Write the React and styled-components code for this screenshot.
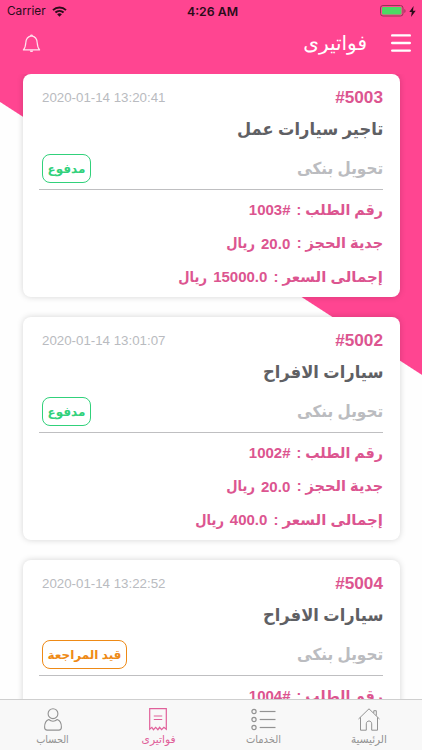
import React from 'react';
import styled, { createGlobalStyle } from 'styled-components';

const GlobalStyle = createGlobalStyle`
  * {
    box-sizing: border-box;
  }

  body {
    margin: 0;
    background: #fefefe;
    font-family: "Liberation Sans", "DejaVu Sans", sans-serif;
  }
`;

// Styled components
const Screen = styled.div`
  width: 422px;
  height: 750px;
  display: flex;
  flex-direction: column;
  overflow: hidden;
  background: linear-gradient(212.9deg, #ff4591 314.3px, #fefefe 315.3px);
`;

const StatusBar = styled.div`
  height: 22px;
  flex: none;
  padding: 0 6px 0 7px;
  display: grid;
  grid-template-columns: 1fr auto 1fr;
  align-items: center;
  font-family: Inter, sans-serif;
  font-size: 11.8px;
  color: #2a0c1a;
`;

const Carrier = styled.div`
  display: flex;
  align-items: center;
  gap: 6px;
`;

const Clock = styled.div`
  padding-left: 2px;
  font-size: 12.3px;
  font-weight: 600;
`;

const Power = styled.div`
  display: flex;
  justify-content: flex-end;
  align-items: center;
  gap: 3px;
`;

const NavBar = styled.header`
  height: 51.5px;
  flex: none;
  padding: 0 11px 9px 22px;
  display: flex;
  align-items: center;
  justify-content: space-between;
`;

const NavRight = styled.div`
  display: flex;
  align-items: center;
  gap: 24px;
`;

const Text = styled.span`
  display: inline-block;
  white-space: nowrap;
  direction: rtl;
  transform: scaleX(${props => props.$stretch || 1});
  transform-origin: ${props => props.$origin || 'right'} center;
`;

const PageTitle = styled(Text)`
  font-size: 20px;
  line-height: 30px;
  color: #fff;
`;

const InvoiceList = styled.main`
  flex: 1;
  min-height: 0;
  padding: 0 22.5px;
  display: flex;
  flex-direction: column;
  gap: 19.5px;
  overflow: hidden;
`;

const InvoiceCard = styled.article`
  height: 223.5px;
  flex: none;
  padding: 11px 16.5px 0;
  border-radius: 8px;
  background: #fff;
  box-shadow: 0 0 6px rgba(0, 0, 0, 0.17);
  direction: rtl;
`;

const CardHeader = styled.div`
  height: 26px;
  padding-left: 3px;
  display: flex;
  align-items: center;
  justify-content: space-between;
`;

const InvoiceId = styled.div`
  font-size: 17.2px;
  font-weight: bold;
  color: #dc5590;
  direction: ltr;
`;

const InvoiceDate = styled.div`
  font-size: 13.3px;
  color: #b9bbc0;
  direction: ltr;
`;

const ServiceRow = styled.div`
  height: 38px;
  display: flex;
  align-items: center;
`;

const Service = styled(Text)`
  font-size: 17.5px;
  font-weight: bold;
  color: #5f6064;
`;

const PaymentRow = styled.div`
  height: 41.5px;
  padding-left: 3px;
  display: flex;
  align-items: center;
  justify-content: space-between;
  border-bottom: 1px solid #bfbfc1;
`;

const Payment = styled(Text)`
  font-size: 16.5px;
  font-weight: bold;
  color: #bbbcc0;
`;

const StatusBadge = styled.div`
  width: ${props => (props.$pending ? 85 : 49)}px;
  height: 29px;
  display: flex;
  align-items: center;
  justify-content: center;
  border: 1px solid;
  border-radius: 8px;
  font-size: 12px;
  font-weight: bold;
  color: ${props => (props.$pending ? '#ee8a16' : '#31d17b')};
`;

const Details = styled.div`
  padding-top: 3px;
`;

const Detail = styled.div`
  height: 33.5px;
  display: flex;
  align-items: center;
  gap: 6px;
  font-size: 15px;
  font-weight: bold;
  color: #dc5590;
`;

const DetailLabel = styled(Text)`
  margin-left: -${props => props.$trim || 0}px;
`;

const DetailValue = styled.span`
  direction: ltr;
`;

const TabBar = styled.nav`
  height: 51px;
  flex: none;
  padding-top: 8px;
  display: grid;
  grid-template-columns: repeat(4, 1fr);
  direction: rtl;
  background: #f8f8f8;
  border-top: 1px solid #cfcfcf;
`;

const Tab = styled.div`
  display: flex;
  flex-direction: column;
  align-items: center;
  font-size: 11px;
  line-height: 17px;
  color: ${props => (props.$active ? '#e0609a' : '#929292')};
`;

const Icon = styled.svg`
  display: block;
  flex: none;
  fill: none;
  stroke: currentColor;
`;

const WifiIcon = () => (
  <Icon width="15" height="11" viewBox="0 0 15 11" strokeWidth="2">
    <path d="M1 4.1a9.4 9.4 0 0 1 13 0M3.4 6.6a6 6 0 0 1 8.2 0" />
    <path d="M7.5 10.7 5.1 8.3a3.5 3.5 0 0 1 4.8 0z" fill="currentColor" stroke="none" />
  </Icon>
);

const BatteryIcon = () => (
  <Icon width="26" height="12" viewBox="0 0 26 12">
    <rect x=".5" y=".5" width="22.5" height="10.5" rx="2.5" stroke="#963457" />
    <rect x="2" y="2" width="19.5" height="7.5" rx="1" fill="#4cd964" stroke="none" />
    <path d="M24.4 4v4c1.5-.8 1.5-3.2 0-4z" fill="#963457" stroke="none" />
  </Icon>
);

const BoltIcon = () => (
  <Icon width="7" height="11" viewBox="0 0 7 11">
    <path d="M4.600 0 .3 6h2.500L2 11l4.700-6.300H4z" fill="#2a0c1a" stroke="none" />
  </Icon>
);

const BellIcon = () => (
  <Icon width="19" height="19" viewBox="0 0 19 19" strokeWidth="1.2" strokeLinejoin="round" color="#ffe4ef">
    <path d="M1.400 15.900C3.400 13.800 3.600 11.500 3.800 8.700 4 5 5.700 2.400 9.500 1.800c3.800.6 5.500 3.200 5.700 6.900.2 2.800.4 5.100 2.400 7.200z" />
    <path d="M8.400 1.700a1.200 1.200 0 0 1 2.200 0" />
    <path d="M7.800 16.400a1.700 1.700 0 0 0 3.400 0z" fill="currentColor" stroke="none" />
  </Icon>
);

const MenuIcon = () => (
  <Icon width="20" height="18" viewBox="0 0 20 18" strokeWidth="2.400" strokeLinecap="round" color="#fff">
    <path d="M1.200 1.400h17.600M1.200 9h17.600M1.200 16.600h17.600" />
  </Icon>
);

const HomeIcon = () => (
  <Icon width="22" height="23" viewBox="0 0 22 23">
    <path d="M.5 11 11 .8 21.500 11M2.500 9.300v12.900h5.800v-6.400c0-3.700 5.400-3.700 5.400 0v6.400h5.800V9.300M15.800 5V2.700h2.500v5" />
  </Icon>
);

const ServicesIcon = () => (
  <Icon width="25" height="23" viewBox="0 0 25 23" strokeWidth="1.200">
    {[3.5, 11.5, 19.5].map((y) => (
      <g key={y}>
        <circle cx="3" cy={y} r="2.100" />
        <path d={`M8.700 ${y}H24.500`} />
      </g>
    ))}
  </Icon>
);

const InvoiceIcon = () => (
  <Icon width="18" height="23" viewBox="0 0 18 23" strokeWidth="1.200">
    <path d="M.7.700h16.600v20.500l-2.400-1.900-2.300 2.400-2-2.400-1.700 2.400-2.200-2.400-2.300 2.400-1.500-2.400L.7 21.200zM4.800 8h8.400M4.800 11.500h8.400" />
  </Icon>
);

const AccountIcon = () => (
  <Icon width="18" height="23" viewBox="0 0 18 23" strokeWidth="1.100">
    <circle cx="9" cy="5.700" r="4.900" />
    <path d="M4.800 11.500C1.500 12.600.6 15.600.6 19.200c0 1.800.9 2.900 2.600 2.900h11.600c1.700 0 2.600-1.100 2.600-2.900 0-3.600-.9-6.600-4.200-7.700-2.400 2.100-6 2.100-8.400 0z" />
  </Icon>
);

const invoices = [
  {
    id: 5003,
    date: '2020-01-14 13:20:41',
    service: 'تاجير سيارات عمل',
    status: 'مدفوع',
    order: 1003,
    deposit: '20.0',
    total: '15000.0',
  },
  {
    id: 5002,
    date: '2020-01-14 13:01:07',
    service: 'سيارات الافراح',
    status: 'مدفوع',
    order: 1002,
    deposit: '20.0',
    total: '400.0',
  },
  {
    id: 5004,
    date: '2020-01-14 13:22:52',
    service: 'سيارات الافراح',
    status: 'قيد المراجعة',
    pending: true,
    order: 1004,
  },
];

const tabs = [
  { label: 'الرئيسية', icon: HomeIcon, stretch: 0.95 },
  { label: 'الخدمات', icon: ServicesIcon, stretch: 0.9 },
  { label: 'فواتيرى', icon: InvoiceIcon, stretch: 0.97, active: true },
  { label: 'الحساب', icon: AccountIcon, stretch: 0.88 },
];

const Currency = () => <Text $stretch={0.87}>ريال</Text>;

const Invoice = ({ invoice }) => (
  <InvoiceCard>
    <CardHeader>
      <InvoiceId>#{invoice.id}</InvoiceId>
      <InvoiceDate>{invoice.date}</InvoiceDate>
    </CardHeader>
    <ServiceRow>
      <Service $stretch={0.93}>{invoice.service}</Service>
    </ServiceRow>
    <PaymentRow>
      <Payment $stretch={0.925}>تحويل بنكى</Payment>
      <StatusBadge $pending={invoice.pending}>
        <Text $origin="center">{invoice.status}</Text>
      </StatusBadge>
    </PaymentRow>
    <Details>
      <Detail>
        <DetailLabel $stretch={0.95} $trim={4.5}>رقم الطلب :</DetailLabel>
        <DetailValue>{invoice.order}#</DetailValue>
      </Detail>
      {invoice.deposit && (
        <Detail>
          <DetailLabel $stretch={0.97} $trim={2.5}>جدية الحجز :</DetailLabel>
          <DetailValue>{invoice.deposit}</DetailValue>
          <Currency />
        </Detail>
      )}
      {invoice.total && (
        <Detail>
          <DetailLabel>إجمالى السعر :</DetailLabel>
          <DetailValue>{invoice.total}</DetailValue>
          <Currency />
        </Detail>
      )}
    </Details>
  </InvoiceCard>
);

const App = () => {
  return (
    <>
      <GlobalStyle />
      <Screen>
        <StatusBar>
          <Carrier>Carrier <WifiIcon /></Carrier>
          <Clock>4:26 AM</Clock>
          <Power><BatteryIcon /><BoltIcon /></Power>
        </StatusBar>
        <NavBar>
          <BellIcon />
          <NavRight>
            <PageTitle>فواتيرى</PageTitle>
            <MenuIcon />
          </NavRight>
        </NavBar>
        <InvoiceList>
          {invoices.map((invoice) => (
            <Invoice key={invoice.id} invoice={invoice} />
          ))}
        </InvoiceList>
        <TabBar>
          {tabs.map(({ label, icon: TabIcon, stretch, active }) => (
            <Tab key={label} $active={active}>
              <TabIcon />
              <Text $stretch={stretch} $origin="center">{label}</Text>
            </Tab>
          ))}
        </TabBar>
      </Screen>
    </>
  );
};

export default App;
